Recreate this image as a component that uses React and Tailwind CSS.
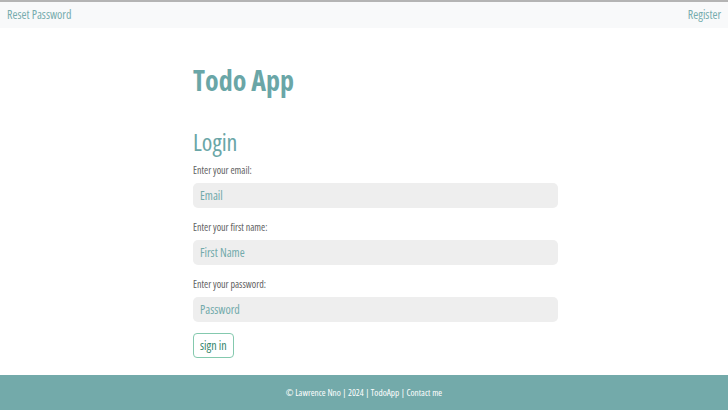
const font = { fontFamily: '"Open Sans", Roboto, sans-serif' };

const Field = ({ label, placeholder, type = 'text' }) => (
  <div className="mb-[13px]">
    <label className="block text-[10px] leading-[12px] text-[#606060] mb-[7px]">{label}</label>
    <input
      type={type}
      placeholder={placeholder}
      className="block w-full h-[25px] rounded-[5px] bg-[#eeeeee] px-[7px] text-[12px] font-normal text-[#6aa6a7] placeholder:text-[#72aaab] outline-none"
    />
  </div>
);

export default function App() {
  return (
    <div className="w-[728px] h-[410px] flex flex-col bg-white font-stretch-condensed" style={font}>
      {/* Navbar */}
      <nav className="h-[28px] flex items-center justify-between px-[7px] bg-[#f8f9fa] border-t-2 border-[#b4b4b4]">
        <a className="text-[12px] text-[#76acad]">Reset Password</a>
        <a className="text-[12px] text-[#76acad]">Register</a>
      </nav>

      {/* Main */}
      <main className="flex-1 pl-[193px]">
        <div className="w-[365px]">
          <h1 className="mt-[34px] text-[28px] leading-[36px] font-bold text-[#6aa6a7]">Todo App</h1>
          <h2 className="mt-[29px] text-[24px] leading-[30px] text-[#6aa6a7]">Login</h2>
          <form className="mt-[7px]">
            <Field label="Enter your email:" placeholder="Email" type="email" />
            <Field label="Enter your first name:" placeholder="First Name" />
            <Field label="Enter your password:" placeholder="Password" type="password" />
            <button
              type="button"
              className="block mt-[-2px] h-[25px] px-[6px] rounded-[4px] border-[1.5px] border-solid border-[#84c9ae] text-[12px] text-[#35866b] bg-white"
            >
              sign in
            </button>
          </form>
        </div>
      </main>

      {/* Footer */}
      <footer className="h-[35px] flex items-center justify-center bg-[#73aaaa] text-[9.25px] text-white">
        © Lawrence Nno | 2024 | TodoApp | Contact me
      </footer>
    </div>
  );
}
